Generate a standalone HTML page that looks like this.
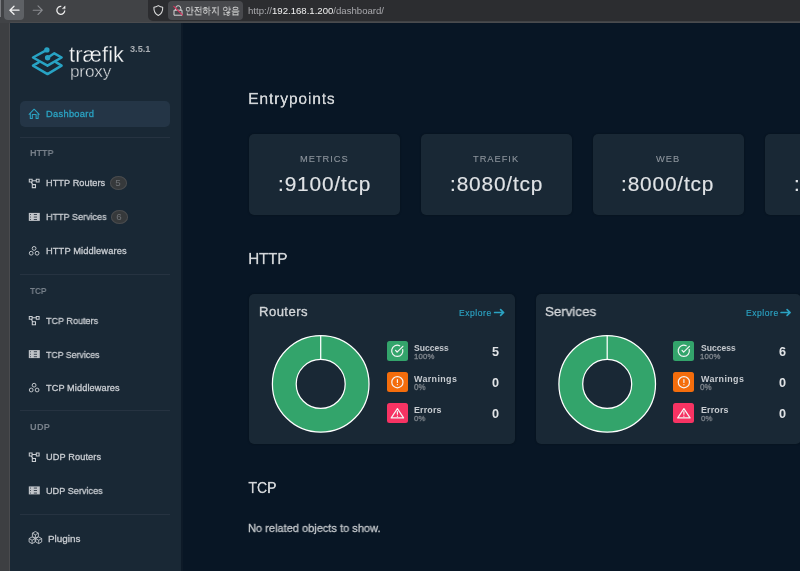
<!DOCTYPE html><html><head><meta charset="utf-8"><style>
html,body{margin:0;padding:0;}
body{width:800px;height:571px;overflow:hidden;position:relative;background:#081625;font-family:"Liberation Sans",sans-serif;}
.t{position:absolute;white-space:nowrap;will-change:transform;}
.r{position:absolute;}
svg{position:absolute;overflow:visible;}
</style></head><body>
<div class="r" style="left:0px;top:0px;width:800.00px;height:23.00px;background:#414346;border-radius:0px;"></div>
<div class="r" style="left:0px;top:0px;width:1.20px;height:17.00px;background:#7a7c80;border-radius:0px;"></div>
<div class="r" style="left:4.2px;top:-5px;width:20.10px;height:25.00px;background:#5e6165;border-radius:4px;"></div>
<div class="r" style="left:148.25px;top:-5px;width:656.75px;height:25.60px;background:#2c2d30;border-radius:5px;"></div>
<div class="r" style="left:168.2px;top:1.2px;width:75.30px;height:18.60px;background:#48494d;border-radius:4px;"></div>
<div class="r" style="left:0px;top:23px;width:10.00px;height:548.00px;background:#3d3f42;border-radius:0px;"></div>
<div class="r" style="left:9px;top:22px;width:796.00px;height:554.00px;background:#4a4b4e;border-radius:2px;"></div>
<div class="r" style="left:10px;top:23px;width:795.00px;height:553.00px;background:#081625;border-radius:0px;"></div>
<div class="r" style="left:10px;top:23px;width:171.00px;height:548.00px;background:#192835;border-radius:0px;"></div>
<div class="r" style="left:181px;top:23px;width:1.50px;height:548.00px;background:#0d1a28;border-radius:0px;"></div>
<svg style="left:0;top:0" width="800" height="23" viewBox="0 0 800 23">
<g fill="none" stroke-linecap="round" stroke-linejoin="round">
<path d="M19 10.2H10M14 6.2L9.9 10.2L14 14.2" stroke="#f2f2f2" stroke-width="1.3"/>
<path d="M33.2 10.2H42M38 5.9L42.3 10.2L38 14.5" stroke="#8a8c90" stroke-width="1.1"/>
<path d="M61.3 6.45A3.95 3.95 0 1 0 64.75 10.5" stroke="#ececec" stroke-width="1.3" stroke-linecap="butt"/>
<path d="M62.6 8.4L65.1 5.9L65.1 8.6Z" fill="#f4f4f4" stroke="#f4f4f4" stroke-width="0.4"/>
<path d="M158.3 5.6C159.8 6.5 161.3 7.1 162.7 7.3C162.9 11.2 161.3 14 158.3 15.5C155.3 14 153.7 11.2 153.9 7.3C155.3 7.1 156.8 6.5 158.3 5.6Z" stroke="#dcdcdc" stroke-width="1.05"/>
<path d="M175.6 10V8.3A2.6 2.6 0 0 1 180.8 8.3V10M174.4 10.2H182V15.2H174.4Z" stroke="#d6d6d6" stroke-width="1.0"/>
<path d="M173.8 6.3L182.4 14.9" stroke="#d9305c" stroke-width="1.15"/>
</g></svg>
<div class="t" style="left:185.0px;top:6.3px;font-size:9.5px;line-height:9.5px;color:#e8e8e8;transform:scaleX(0.87);transform-origin:0 0;">안전하지 않음</div>
<div class="t" style="left:247.6px;top:6.27px;font-size:9.6px;line-height:9.6px;color:#a9a9ad;">http://<span style="color:#f0f0f0">192.168.1.200</span>/dashboard/</div>
<svg style="left:0;top:0" width="180" height="100" viewBox="0 0 180 100">
<g fill="none" stroke="#28a3c4" stroke-width="2.5" stroke-linejoin="round" stroke-linecap="round">
<path d="M46.9 49.9L33 57.5L47.5 65.7L61.6 57.5L54.3 53.3L47.6 57.8"/>
<path d="M38.6 62.4L33 65.6L47.5 74.1L61.6 65.6L56.2 62.4"/>
</g>
<circle cx="46.9" cy="49.9" r="2.7" fill="#28a3c4"/>
<circle cx="47.6" cy="57.8" r="2.7" fill="#28a3c4"/>
</svg>
<div class="t" style="left:68.6px;top:43.75px;font-size:21.8px;line-height:21.8px;color:#f4f5f6;font-weight:400;letter-spacing:0.1px;-webkit-text-stroke:0.3px #192835;">træfik</div>
<div class="t" style="left:69.6px;top:63.04px;font-size:17.2px;line-height:17.2px;color:#e4e6e8;font-weight:400;letter-spacing:-0.2px;-webkit-text-stroke:0.4px #192835;">proxy</div>
<div class="t" style="left:130px;top:44.71px;font-size:9.2px;line-height:9.2px;color:#a9aeb3;font-weight:700;">3.5.1</div>
<div class="r" style="left:20.25px;top:100.9px;width:150.05px;height:26.00px;background:#243546;border-radius:5px;"></div>
<svg style="left:0;top:0" width="180" height="571" viewBox="0 0 180 571">
<g fill="none" stroke-linecap="round" stroke-linejoin="round">
<path d="M29.1 114.3L34.1 109.2L39.2 114.3M30.3 113.2V118.4H32.3V114.4H36.1V118.4H38.1V113.2" stroke="#2ba3c3" stroke-width="1.05"/>
</g>
</svg>
<div class="t" style="left:45.84px;top:109.53px;font-size:9.30px;line-height:9.30px;color:#2ba3c3;font-weight:400;letter-spacing:0.294px;-webkit-text-stroke-width:0.3px;">Dashboard</div>
<div class="r" style="left:20px;top:137.0px;width:150.30px;height:1.00px;background:#263341;border-radius:0px;"></div>
<div class="r" style="left:20px;top:274.0px;width:150.30px;height:1.00px;background:#263341;border-radius:0px;"></div>
<div class="r" style="left:20px;top:410.0px;width:150.30px;height:1.00px;background:#263341;border-radius:0px;"></div>
<div class="r" style="left:20px;top:513.5px;width:150.30px;height:1.00px;background:#263341;border-radius:0px;"></div>
<div class="t" style="left:29.99px;top:148.56px;font-size:9.08px;line-height:9.08px;color:#77808a;font-weight:700;letter-spacing:-0.000px;transform:scaleX(0.9868);transform-origin:0.61px 0;">HTTP</div>
<div class="t" style="left:30.09px;top:285.70px;font-size:9.45px;line-height:9.45px;color:#77808a;font-weight:700;letter-spacing:-0.000px;transform:scaleX(0.8718);transform-origin:0.11px 0;">TCP</div>
<div class="t" style="left:29.65px;top:423.25px;font-size:9.16px;line-height:9.16px;color:#77808a;font-weight:700;letter-spacing:0.315px;">UDP</div>
<div class="t" style="left:45.75px;top:178.75px;font-size:9.16px;line-height:9.16px;color:#c9cdd2;font-weight:400;letter-spacing:0.070px;-webkit-text-stroke-width:0.3px;">HTTP Routers</div>
<div class="t" style="left:45.71px;top:212.38px;font-size:9.59px;line-height:9.59px;color:#c9cdd2;font-weight:400;letter-spacing:-0.000px;transform:scaleX(0.9422);transform-origin:0.79px 0;-webkit-text-stroke-width:0.3px;">HTTP Services</div>
<div class="t" style="left:45.74px;top:247.33px;font-size:9.30px;line-height:9.30px;color:#c9cdd2;font-weight:400;letter-spacing:0.114px;-webkit-text-stroke-width:0.3px;">HTTP Middlewares</div>
<div class="t" style="left:46.29px;top:315.70px;font-size:9.45px;line-height:9.45px;color:#c9cdd2;font-weight:400;letter-spacing:-0.000px;transform:scaleX(0.9566);transform-origin:0.21px 0;-webkit-text-stroke-width:0.3px;">TCP Routers</div>
<div class="t" style="left:46.29px;top:349.70px;font-size:9.45px;line-height:9.45px;color:#c9cdd2;font-weight:400;letter-spacing:-0.000px;transform:scaleX(0.9302);transform-origin:0.21px 0;-webkit-text-stroke-width:0.3px;">TCP Services</div>
<div class="t" style="left:46.29px;top:384.25px;font-size:9.16px;line-height:9.16px;color:#c9cdd2;font-weight:400;letter-spacing:0.105px;-webkit-text-stroke-width:0.3px;">TCP Middlewares</div>
<div class="t" style="left:45.79px;top:453.15px;font-size:9.16px;line-height:9.16px;color:#c9cdd2;font-weight:400;letter-spacing:0.130px;-webkit-text-stroke-width:0.3px;">UDP Routers</div>
<div class="t" style="left:45.79px;top:487.45px;font-size:9.16px;line-height:9.16px;color:#c9cdd2;font-weight:400;letter-spacing:-0.000px;transform:scaleX(0.9955);transform-origin:0.71px 0;-webkit-text-stroke-width:0.3px;">UDP Services</div>
<svg style="left:0;top:0" width="180" height="571" viewBox="0 0 180 571">
<g transform="translate(0,0.0)" fill="none" stroke="#c9cdd2" stroke-width="1.05"><path d="M29.3 179.2h2.8v2.9h-2.8zM36.3 179.2h2.8v2.9h-2.8zM32.3 184.6h3.2v3h-3.2zM32.1 180.65h4.2M31.2 182.1l1.6 2.5" /></g>
<g transform="translate(0,0.0)"><rect x="28.8" y="212.9" width="11" height="8" fill="#bfc3c8"/>
<g fill="#2c3743"><rect x="33.8" y="214.1" width="3.2" height="0.9"/><rect x="33.8" y="216.6" width="3.2" height="0.9"/><rect x="33.8" y="219.1" width="3.2" height="0.9"/>
<rect x="30" y="214.1" width="0.9" height="0.9"/><rect x="30" y="216.6" width="0.9" height="0.9"/><rect x="30" y="219.1" width="0.9" height="0.9"/></g></g>
<g transform="translate(0,0.0)" fill="none" stroke="#c9cdd2" stroke-width="0.95"><circle cx="34.1" cy="248.4" r="1.9"/><circle cx="31.2" cy="253.2" r="1.9"/><circle cx="37.1" cy="253.2" r="1.9"/></g>
<g transform="translate(0,137.2)" fill="none" stroke="#c9cdd2" stroke-width="1.05"><path d="M29.3 179.2h2.8v2.9h-2.8zM36.3 179.2h2.8v2.9h-2.8zM32.3 184.6h3.2v3h-3.2zM32.1 180.65h4.2M31.2 182.1l1.6 2.5" /></g>
<g transform="translate(0,137.2)"><rect x="28.8" y="212.9" width="11" height="8" fill="#bfc3c8"/>
<g fill="#2c3743"><rect x="33.8" y="214.1" width="3.2" height="0.9"/><rect x="33.8" y="216.6" width="3.2" height="0.9"/><rect x="33.8" y="219.1" width="3.2" height="0.9"/>
<rect x="30" y="214.1" width="0.9" height="0.9"/><rect x="30" y="216.6" width="0.9" height="0.9"/><rect x="30" y="219.1" width="0.9" height="0.9"/></g></g>
<g transform="translate(0,136.8)" fill="none" stroke="#c9cdd2" stroke-width="0.95"><circle cx="34.1" cy="248.4" r="1.9"/><circle cx="31.2" cy="253.2" r="1.9"/><circle cx="37.1" cy="253.2" r="1.9"/></g>
<g transform="translate(0,273.8)" fill="none" stroke="#c9cdd2" stroke-width="1.05"><path d="M29.3 179.2h2.8v2.9h-2.8zM36.3 179.2h2.8v2.9h-2.8zM32.3 184.6h3.2v3h-3.2zM32.1 180.65h4.2M31.2 182.1l1.6 2.5" /></g>
<g transform="translate(0,273.5)"><rect x="28.8" y="212.9" width="11" height="8" fill="#bfc3c8"/>
<g fill="#2c3743"><rect x="33.8" y="214.1" width="3.2" height="0.9"/><rect x="33.8" y="216.6" width="3.2" height="0.9"/><rect x="33.8" y="219.1" width="3.2" height="0.9"/>
<rect x="30" y="214.1" width="0.9" height="0.9"/><rect x="30" y="216.6" width="0.9" height="0.9"/><rect x="30" y="219.1" width="0.9" height="0.9"/></g></g>
<g fill="none" stroke="#c9cdd2" stroke-width="0.85" stroke-linejoin="round"><path d="M35.4 531.5L38.4 533.15V536.55L35.4 538.1999999999999L32.4 536.55V533.15ZM32.4 533.15L35.4 534.8499999999999L38.4 533.15M35.4 534.8499999999999V538.1999999999999"/><path d="M32.1 536.9000000000001L35.1 538.5500000000001V541.95L32.1 543.6L29.1 541.95V538.5500000000001ZM29.1 538.5500000000001L32.1 540.25L35.1 538.5500000000001M32.1 540.25V543.6"/><path d="M38.7 536.9000000000001L41.7 538.5500000000001V541.95L38.7 543.6L35.7 541.95V538.5500000000001ZM35.7 538.5500000000001L38.7 540.25L41.7 538.5500000000001M38.7 540.25V543.6"/></g>
</svg>
<div class="t" style="left:48.19px;top:533.93px;font-size:9.88px;line-height:9.88px;color:#c9cdd2;font-weight:400;letter-spacing:-0.000px;transform:scaleX(0.9984);transform-origin:0.81px 0;-webkit-text-stroke-width:0.3px;">Plugins</div>
<div class="r" style="left:110px;top:176.2px;width:16.80px;height:13.60px;background:#36393b;border-radius:0px;border-radius:50%;box-shadow:inset 0 0 0 1px #484b4e;"></div>
<div class="t" style="left:110.40px;width:16px;text-align:center;top:178.40px;font-size:9.8px;line-height:9.8px;color:#6e7276;font-weight:400;">5</div>
<div class="r" style="left:111.2px;top:210.0px;width:16.50px;height:13.70px;background:#36393b;border-radius:0px;border-radius:50%;box-shadow:inset 0 0 0 1px #484b4e;"></div>
<div class="t" style="left:111.45px;width:16px;text-align:center;top:212.40px;font-size:9.8px;line-height:9.8px;color:#6e7276;font-weight:400;">6</div>
<div class="t" style="left:246.75px;top:91.00px;font-size:31.07px;line-height:31.07px;color:#d3d6d9;font-weight:400;letter-spacing:1.745px;transform:scale(0.5000,0.5000);transform-origin:2.55px 0;-webkit-text-stroke-width:0.70px;">Entrypoints</div>
<div class="r" style="left:249px;top:133.5px;width:151.20px;height:81.00px;background:#192835;border-radius:5px;box-shadow:0 0 2px rgba(0,0,0,0.35);"></div>
<div class="t" style="left:299.89px;top:154.93px;font-size:9.30px;line-height:9.30px;color:#8d959d;font-weight:400;letter-spacing:0.970px;-webkit-text-stroke-width:0.1px;">METRICS</div>
<div class="t" style="left:277.86px;top:173.59px;font-size:20.86px;line-height:20.86px;color:#e0e3e6;font-weight:400;letter-spacing:0.830px;-webkit-text-stroke-width:0.15px;">:9100/tcp</div>
<div class="r" style="left:420.75px;top:133.5px;width:151.20px;height:81.00px;background:#192835;border-radius:5px;box-shadow:0 0 2px rgba(0,0,0,0.35);"></div>
<div class="t" style="left:473.05px;top:154.93px;font-size:9.30px;line-height:9.30px;color:#8d959d;font-weight:400;letter-spacing:0.970px;-webkit-text-stroke-width:0.1px;">TRAEFIK</div>
<div class="t" style="left:449.61px;top:173.59px;font-size:20.86px;line-height:20.86px;color:#e0e3e6;font-weight:400;letter-spacing:0.830px;-webkit-text-stroke-width:0.15px;">:8080/tcp</div>
<div class="r" style="left:592.6px;top:133.5px;width:151.20px;height:81.00px;background:#192835;border-radius:5px;box-shadow:0 0 2px rgba(0,0,0,0.35);"></div>
<div class="t" style="left:656.16px;top:154.93px;font-size:9.30px;line-height:9.30px;color:#8d959d;font-weight:400;letter-spacing:0.970px;-webkit-text-stroke-width:0.1px;">WEB</div>
<div class="t" style="left:621.46px;top:173.59px;font-size:20.86px;line-height:20.86px;color:#e0e3e6;font-weight:400;letter-spacing:0.830px;-webkit-text-stroke-width:0.15px;">:8000/tcp</div>
<div class="r" style="left:765px;top:133.5px;width:151.20px;height:81.00px;background:#192835;border-radius:5px;box-shadow:0 0 2px rgba(0,0,0,0.35);"></div>
<div class="t" style="left:806.22px;top:154.93px;font-size:9.30px;line-height:9.30px;color:#8d959d;font-weight:400;letter-spacing:0.970px;-webkit-text-stroke-width:0.1px;">WEBSECURE</div>
<div class="t" style="left:793.86px;top:173.59px;font-size:20.86px;line-height:20.86px;color:#e0e3e6;font-weight:400;letter-spacing:0.830px;-webkit-text-stroke-width:0.15px;">:8443/tcp</div>
<div class="t" style="left:247.22px;top:250.77px;font-size:31.48px;line-height:31.48px;color:#d3d6d9;font-weight:400;letter-spacing:-0.000px;transform:scale(0.4747,0.5000);transform-origin:2.58px 0;-webkit-text-stroke-width:0.70px;">HTTP</div>
<div class="r" style="left:249px;top:293.5px;width:265.80px;height:150.30px;background:#192835;border-radius:5px;box-shadow:0 0 2px rgba(0,0,0,0.35);"></div>
<div class="t" style="left:259.03px;top:305.38px;font-size:13.08px;line-height:13.08px;color:#d3d6d9;font-weight:400;letter-spacing:0.457px;-webkit-text-stroke-width:0.35px;">Routers</div>
<div class="t" style="left:459.10px;top:308.85px;font-size:8.56px;line-height:8.56px;color:#2ba3c3;font-weight:400;letter-spacing:0.542px;-webkit-text-stroke-width:0.15px;">Explore</div>
<svg style="left:0;top:0" width="800" height="571" viewBox="0 0 800 571">
<path d="M494.6 312.5H503.6M500.6 309.6L503.6 312.5L500.6 315.4" fill="none" stroke="#2ba3c3" stroke-width="1.7" stroke-linecap="round" stroke-linejoin="round"/>
<circle cx="320.7" cy="383.9" r="36.4" fill="none" stroke="#33a46b" stroke-width="23.8"/>
<circle cx="320.7" cy="383.9" r="48.3" fill="none" stroke="#ffffff" stroke-width="1.25"/>
<circle cx="320.7" cy="383.9" r="24.5" fill="none" stroke="#ffffff" stroke-width="1.25"/>
<path d="M320.7 335.4V359.7" stroke="#ffffff" stroke-width="1.25"/>
</svg>
<div class="r" style="left:386.9px;top:340.9px;width:21.00px;height:20.40px;background:#33a46b;border-radius:2.5px;"></div>
<div class="t" style="left:414.15px;top:343.94px;font-size:8.58px;line-height:8.58px;color:#c9cdd2;font-weight:700;letter-spacing:-0.000px;transform:scaleX(0.9940);transform-origin:0.25px 0;">Success</div>
<div class="t" style="left:413.81px;top:352.67px;font-size:7.78px;line-height:7.78px;color:#80878e;font-weight:400;letter-spacing:0.194px;-webkit-text-stroke-width:0.3px;">100%</div>
<div class="t" style="left:492.07px;top:345.90px;font-size:12.65px;line-height:12.65px;color:#e0e3e6;font-weight:700;letter-spacing:0.000px;">5</div>
<div class="r" style="left:386.9px;top:371.7px;width:21.00px;height:20.40px;background:#f46d0c;border-radius:2.5px;"></div>
<div class="t" style="left:414.09px;top:374.89px;font-size:8.87px;line-height:8.87px;color:#c9cdd2;font-weight:700;letter-spacing:0.397px;">Warnings</div>
<div class="t" style="left:413.78px;top:384.11px;font-size:8.14px;line-height:8.14px;color:#80878e;font-weight:400;letter-spacing:-0.000px;transform:scaleX(0.9770);transform-origin:0.32px 0;-webkit-text-stroke-width:0.3px;">0%</div>
<div class="t" style="left:492.09px;top:376.70px;font-size:12.65px;line-height:12.65px;color:#e0e3e6;font-weight:700;letter-spacing:0.000px;">0</div>
<div class="r" style="left:386.9px;top:402.9px;width:21.00px;height:20.40px;background:#f73363;border-radius:2.5px;"></div>
<div class="t" style="left:414.10px;top:406.23px;font-size:8.94px;line-height:8.94px;color:#c9cdd2;font-weight:700;letter-spacing:0.137px;">Errors</div>
<div class="t" style="left:414.09px;top:414.73px;font-size:7.99px;line-height:7.99px;color:#80878e;font-weight:400;letter-spacing:-0.000px;transform:scaleX(0.9674);transform-origin:0.31px 0;-webkit-text-stroke-width:0.3px;">0%</div>
<div class="t" style="left:492.09px;top:407.90px;font-size:12.65px;line-height:12.65px;color:#e0e3e6;font-weight:700;letter-spacing:0.000px;">0</div>
<svg style="left:0;top:0" width="800" height="571" viewBox="0 0 800 571"><g fill="none" stroke="#f4f4f4" stroke-width="1.2" stroke-linecap="round" stroke-linejoin="round"><path d="M402.7 349.5A5.6 5.6 0 1 1 399.7 345.8"/><path d="M395.59999999999997 350.3L397.09999999999997 352.2L402.9 346.3"/><circle cx="397.4" cy="382.2" r="5.6"/><path d="M397.4 379.6V382.4M397.4 384.6V384.7"/><path d="M397.4 408.6L403.59999999999997 417.9H391.2Z"/><path d="M397.4 411.6V414.2M397.4 416.2V416.3"/></g></svg>
<div class="r" style="left:535.5px;top:293.5px;width:265.80px;height:150.30px;background:#192835;border-radius:5px;box-shadow:0 0 2px rgba(0,0,0,0.35);"></div>
<div class="t" style="left:545.33px;top:305.03px;font-size:13.55px;line-height:13.55px;color:#d3d6d9;font-weight:400;letter-spacing:-0.000px;transform:scaleX(0.9842);transform-origin:0.62px 0;-webkit-text-stroke-width:0.35px;">Services</div>
<div class="t" style="left:745.60px;top:308.85px;font-size:8.56px;line-height:8.56px;color:#2ba3c3;font-weight:400;letter-spacing:0.542px;-webkit-text-stroke-width:0.15px;">Explore</div>
<svg style="left:0;top:0" width="800" height="571" viewBox="0 0 800 571">
<path d="M781.1 312.5H790.1M787.1 309.6L790.1 312.5L787.1 315.4" fill="none" stroke="#2ba3c3" stroke-width="1.7" stroke-linecap="round" stroke-linejoin="round"/>
<circle cx="607.2" cy="383.9" r="36.4" fill="none" stroke="#33a46b" stroke-width="23.8"/>
<circle cx="607.2" cy="383.9" r="48.3" fill="none" stroke="#ffffff" stroke-width="1.25"/>
<circle cx="607.2" cy="383.9" r="24.5" fill="none" stroke="#ffffff" stroke-width="1.25"/>
<path d="M607.2 335.4V359.7" stroke="#ffffff" stroke-width="1.25"/>
</svg>
<div class="r" style="left:673.4px;top:340.9px;width:21.00px;height:20.40px;background:#33a46b;border-radius:2.5px;"></div>
<div class="t" style="left:700.65px;top:343.94px;font-size:8.58px;line-height:8.58px;color:#c9cdd2;font-weight:700;letter-spacing:-0.000px;transform:scaleX(0.9940);transform-origin:0.25px 0;">Success</div>
<div class="t" style="left:700.31px;top:352.67px;font-size:7.78px;line-height:7.78px;color:#80878e;font-weight:400;letter-spacing:0.194px;-webkit-text-stroke-width:0.3px;">100%</div>
<div class="t" style="left:778.58px;top:345.90px;font-size:12.65px;line-height:12.65px;color:#e0e3e6;font-weight:700;letter-spacing:0.000px;">6</div>
<div class="r" style="left:673.4px;top:371.7px;width:21.00px;height:20.40px;background:#f46d0c;border-radius:2.5px;"></div>
<div class="t" style="left:700.59px;top:374.89px;font-size:8.87px;line-height:8.87px;color:#c9cdd2;font-weight:700;letter-spacing:0.397px;">Warnings</div>
<div class="t" style="left:700.28px;top:384.11px;font-size:8.14px;line-height:8.14px;color:#80878e;font-weight:400;letter-spacing:-0.000px;transform:scaleX(0.9770);transform-origin:0.32px 0;-webkit-text-stroke-width:0.3px;">0%</div>
<div class="t" style="left:778.59px;top:376.70px;font-size:12.65px;line-height:12.65px;color:#e0e3e6;font-weight:700;letter-spacing:0.000px;">0</div>
<div class="r" style="left:673.4px;top:402.9px;width:21.00px;height:20.40px;background:#f73363;border-radius:2.5px;"></div>
<div class="t" style="left:700.60px;top:406.23px;font-size:8.94px;line-height:8.94px;color:#c9cdd2;font-weight:700;letter-spacing:0.137px;">Errors</div>
<div class="t" style="left:700.59px;top:414.73px;font-size:7.99px;line-height:7.99px;color:#80878e;font-weight:400;letter-spacing:-0.000px;transform:scaleX(0.9674);transform-origin:0.31px 0;-webkit-text-stroke-width:0.3px;">0%</div>
<div class="t" style="left:778.59px;top:407.90px;font-size:12.65px;line-height:12.65px;color:#e0e3e6;font-weight:700;letter-spacing:0.000px;">0</div>
<svg style="left:0;top:0" width="800" height="571" viewBox="0 0 800 571"><g fill="none" stroke="#f4f4f4" stroke-width="1.2" stroke-linecap="round" stroke-linejoin="round"><path d="M689.1999999999999 349.5A5.6 5.6 0 1 1 686.1999999999999 345.8"/><path d="M682.1 350.3L683.6 352.2L689.4 346.3"/><circle cx="683.9" cy="382.2" r="5.6"/><path d="M683.9 379.6V382.4M683.9 384.6V384.7"/><path d="M683.9 408.6L690.1 417.9H677.6999999999999Z"/><path d="M683.9 411.6V414.2M683.9 416.2V416.3"/></g></svg>
<div class="t" style="left:248.19px;top:480.37px;font-size:31.48px;line-height:31.48px;color:#d3d6d9;font-weight:400;letter-spacing:-0.000px;transform:scale(0.4456,0.5000);transform-origin:0.71px 0;-webkit-text-stroke-width:0.70px;">TCP</div>
<div class="t" style="left:248.45px;top:523.21px;font-size:11.56px;line-height:11.56px;color:#c3c7cb;font-weight:400;letter-spacing:-0.000px;transform:scaleX(0.9553);transform-origin:0.95px 0;-webkit-text-stroke-width:0.3px;">No related objects to show.</div>
</body></html>
